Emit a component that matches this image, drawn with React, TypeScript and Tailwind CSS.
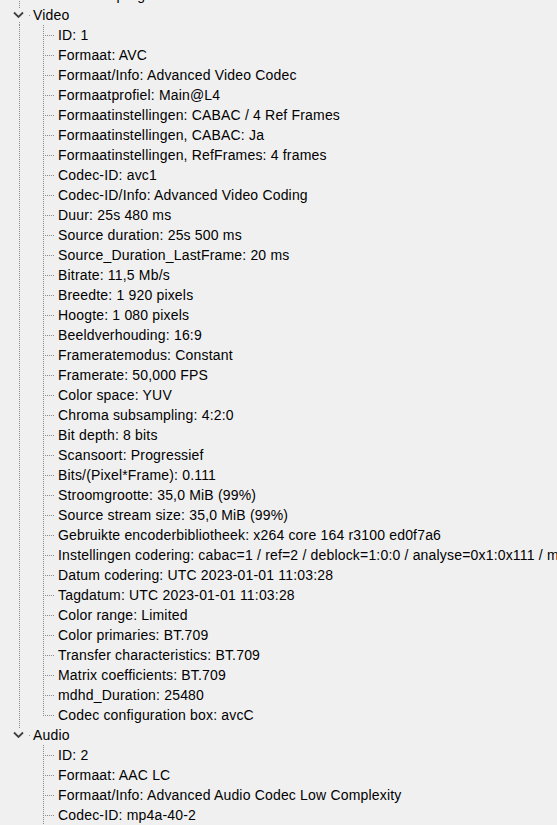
const LINE = "#8c8c8c";

const videoItems = [
  "ID: 1",
  "Formaat: AVC",
  "Formaat/Info: Advanced Video Codec",
  "Formaatprofiel: Main@L4",
  "Formaatinstellingen: CABAC / 4 Ref Frames",
  "Formaatinstellingen, CABAC: Ja",
  "Formaatinstellingen, RefFrames: 4 frames",
  "Codec-ID: avc1",
  "Codec-ID/Info: Advanced Video Coding",
  "Duur: 25s 480 ms",
  "Source duration: 25s 500 ms",
  "Source_Duration_LastFrame: 20 ms",
  "Bitrate: 11,5 Mb/s",
  "Breedte: 1 920 pixels",
  "Hoogte: 1 080 pixels",
  "Beeldverhouding: 16:9",
  "Frameratemodus: Constant",
  "Framerate: 50,000 FPS",
  "Color space: YUV",
  "Chroma subsampling: 4:2:0",
  "Bit depth: 8 bits",
  "Scansoort: Progressief",
  "Bits/(Pixel*Frame): 0.111",
  "Stroomgrootte: 35,0 MiB (99%)",
  "Source stream size: 35,0 MiB (99%)",
  "Gebruikte encoderbibliotheek: x264 core 164 r3100 ed0f7a6",
  "Instellingen codering: cabac=1 / ref=2 / deblock=1:0:0 / analyse=0x1:0x111 / me=hex / subme=6 / psy=1",
  "Datum codering: UTC 2023-01-01 11:03:28",
  "Tagdatum: UTC 2023-01-01 11:03:28",
  "Color range: Limited",
  "Color primaries: BT.709",
  "Transfer characteristics: BT.709",
  "Matrix coefficients: BT.709",
  "mdhd_Duration: 25480",
  "Codec configuration box: avcC",
];

const audioItems = [
  "ID: 2",
  "Formaat: AAC LC",
  "Formaat/Info: Advanced Audio Codec Low Complexity",
  "Codec-ID: mp4a-40-2",
  "Duur: 25s 472 ms",
];

function ChildRow({ text, rootLine, last }: { text: string; rootLine: boolean; last: boolean }) {
  return (
    <div className="flex h-5 items-center">
      <svg width="57" height="20" className="shrink-0" shapeRendering="crispEdges">
        {rootLine && (
          <line x1="19.5" y1="0" x2="19.5" y2="20" stroke={LINE} strokeDasharray="1 1" />
        )}
        <line x1="43.5" y1="0" x2="43.5" y2={last ? 11 : 20} stroke={LINE} strokeDasharray="1 1" />
        <line x1="45" y1="10.5" x2="55" y2="10.5" stroke={LINE} strokeDasharray="1 1" />
      </svg>
      <span className="pl-px whitespace-nowrap">{text}</span>
    </div>
  );
}

function NodeRow({ text, last }: { text: string; last: boolean }) {
  return (
    <div className="flex h-5 items-center">
      <svg width="33" height="20" className="shrink-0" shapeRendering="crispEdges">
        <line x1="19.5" y1="0" x2="19.5" y2="4" stroke={LINE} strokeDasharray="1 1" />
        {!last && (
          <line x1="19.5" y1="17" x2="19.5" y2="20" stroke={LINE} strokeDasharray="1 1" />
        )}
        <rect x="29" y="10" width="1" height="1" fill={LINE} />
        <path
          d="M14 7.5 L18.5 12 L23 7.5"
          fill="none"
          stroke="#404040"
          strokeWidth="1.8"
          shapeRendering="geometricPrecision"
        />
      </svg>
      <span className="whitespace-nowrap">{text}</span>
    </div>
  );
}

export default function App() {
  return (
    <div
      className="h-[825px] w-[557px] overflow-hidden bg-[#f0f0f0] text-[14px] leading-5 tracking-[0.18px] text-black"
      style={{ fontFamily: '"Liberation Sans", Arial, sans-serif' }}
    >
      <div className="-mt-[15px]">
        <ChildRow text="Gebruikt programma: Lavf59.27.100" rootLine={true} last={true} />
        <NodeRow text="Video" last={false} />
        {videoItems.map((t, i) => (
          <ChildRow key={t} text={t} rootLine={true} last={i === videoItems.length - 1} />
        ))}
        <NodeRow text="Audio" last={true} />
        {audioItems.map((t, i) => (
          <ChildRow key={t} text={t} rootLine={false} last={i === audioItems.length - 1} />
        ))}
      </div>
    </div>
  );
}
